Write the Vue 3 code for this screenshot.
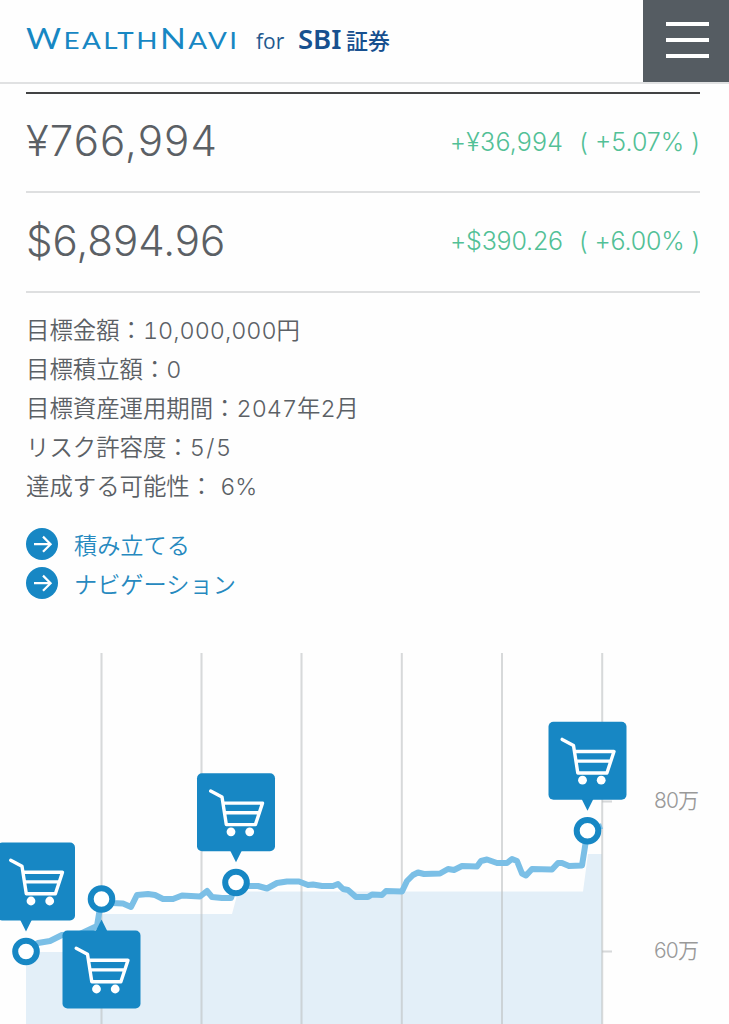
<template>
  <div class="page">

    <!-- HEADER -->
    <header class="header">
      <div class="brand">
        <span class="logo"><span class="cap">W</span>EALTH<span class="cap">N</span>AVI</span>
        <span class="for">for</span>
        <span class="sbi">SBI</span>
        <span class="sbi-jp">証券</span>
      </div>
      <button class="menu" type="button" aria-label="メニュー">
        <span></span><span></span><span></span>
      </button>
    </header>

    <!-- ASSETS -->
    <section class="assets">
      <div v-for="a in assets" :key="a.amount" class="asset-row" :class="a.cls">
        <div class="amount">{{ a.amount }}</div>
        <div class="change">
          <span class="diff">{{ a.diff }}</span>
          <span class="rate"><span>(</span><span>{{ a.rate }}</span><span>)</span></span>
        </div>
      </div>
    </section>

    <!-- GOAL -->
    <section class="goal">
      <div v-for="g in goals" :key="g.label" class="goal-row">
        <span>{{ g.label }}：</span><span class="num" :class="g.cls">{{ g.value }}</span><template v-if="g.unit"><span>{{ g.unit }}</span></template><template v-if="g.month"><span class="num">{{ g.month }}</span><span>月</span></template>
      </div>
    </section>

    <nav class="links">
      <a v-for="l in links" :key="l" class="link">
        <svg class="link-icon" viewBox="0 0 32 32">
          <circle cx="16" cy="16" r="16" />
          <path d="M8 16.2H24.5M17 8.6L24.6 16.2L17 23.8" />
        </svg>
        <span>{{ l }}</span>
      </a>
    </nav>

    <!-- CHART -->
    <svg class="chart" viewBox="0 640 729 384" width="729" height="384">
      <defs>
        <g id="cart">
          <path class="cart-line" d="M13.7 17.7L25 23.7L29.3 51.3H58.4L65.5 29.8H26.2M27.7 39.4H62.3" />
          <circle class="cart-wheel" cx="34" cy="58.5" r="4.4" />
          <circle class="cart-wheel" cx="52.7" cy="58.5" r="4.4" />
        </g>
      </defs>
      <path class="area" d="M26 1024V952H96L101 914H232L238 891.5H583L588 854H602V1024Z" />
      <path v-for="x in gridX" :key="x" class="grid" :d="`M${x} 653V1024`" />
      <path class="grid" d="M602 801.5H612M602 951.5H612" />
      <polyline class="line" :points="line" />
      <g v-for="p in pins" :key="p.x">
        <circle class="dot" :cx="p.x" :cy="p.y" r="10.8" />
        <path class="pin" :d="p.up ? `M${p.x - 6} ${p.top + 1}l6 -12l6 12z` : `M${p.x - 6} ${p.top + 77}l6 12l6 -12z`" />
        <rect class="pin" :x="p.left" :y="p.top" width="78" height="78" rx="5" />
        <use href="#cart" :x="p.left" :y="p.top" />
      </g>
      <text class="axis" x="654" y="808" textLength="45">80万</text>
      <text class="axis" x="654" y="958" textLength="45">60万</text>
    </svg>
  </div>
</template>

<script setup>
const assets = [
  { amount: '¥766,994', diff: '+¥36,994', rate: '+5.07%', cls: 'yen' },
  { amount: '$6,894.96', diff: '+$390.26', rate: '+6.00%', cls: 'dollar' },
]

const goals = [
  { label: '目標金額', value: '10,000,000', unit: '円' },
  { label: '目標積立額', value: '0' },
  { label: '目標資産運用期間', value: '2047', unit: '年', month: '2' },
  { label: 'リスク許容度', value: '5/5', cls: 'wide' },
  { label: '達成する可能性', value: '6%', cls: 'spaced' },
]

const links = ['積み立てる', 'ナビゲーション']

const gridX = [101.5, 201.5, 301.5, 401.8, 502, 602.2]

const line = [
  '26,951 38,943 50,941 62,935 80,934 97,926 101.5,899 112,903 123,903.5 131,907 137,895 148,894 155,895',
  '163,899 173,899 182,895.5 200,896.5 207,891 212,897 222,898 231,898 236,883 248,886 258,886 267,888.5',
  '277,883 287,881.5 299,881.5 308,885 313,884.5 322,886 333,886 338,884 343,889 348,890 356,897 368,897',
  '372,894.5 382,895 386,891 402,891.5 407,881 413,875 418,872.5 424,874 440,873.5 448,869 454,870 462,866',
  '477,866.5 481,861 487,859.5 497,863 507,863 512,859 517,861 522,873.5 526,875.5 532,869 552,869.5',
  '558,863 562,863 569,866 582,865.5 587.5,831 602,826',
].join(' ')

// the first pin is pushed right so that its cart stays on screen
const pins = [
  { x: 26, y: 951.5, left: -3, top: 842.5 },
  { x: 101.5, y: 899, left: 62.5, top: 930.5, up: true },
  { x: 236, y: 882.5, left: 197, top: 773.3 },
  { x: 587.5, y: 830.7, left: 548.5, top: 721.7 },
]
</script>

<style>
body { background: #fefefe; }
</style>

<style scoped>
.page {
  width: 729px;
  height: 1024px;
  overflow: hidden;
  display: flex;
  flex-direction: column;
  color: #5b6065;
  font-family: Inter, 'Noto Sans CJK JP', sans-serif;
  font-weight: 350;
}

/* HEADER */
.header {
  flex: none;
  height: 82px;
  display: flex;
  justify-content: space-between;
  border-bottom: 2px solid #e0e1e2;
}
.brand {
  display: flex;
  align-items: baseline;
  padding: 21px 0 0 26px;
  line-height: 34px;
  white-space: nowrap;
}
.logo {
  width: 230px;
  font-family: Lato, sans-serif;
  font-weight: 400;
  font-size: 23px;
  letter-spacing: 2px;
  color: #1787c3;
  transform: scaleX(1.21);
  transform-origin: left;
}
.cap { font-size: 28px; }
.for {
  width: 42px;
  font-family: 'Open Sans', sans-serif;
  font-weight: 400;
  font-size: 21px;
  color: #23598f;
}
.sbi {
  width: 48px;
  font-family: 'Noto Sans', sans-serif;
  font-weight: 600;
  font-size: 27.5px;
  color: #17508f;
}
.sbi-jp {
  font-family: 'Noto Sans CJK JP', sans-serif;
  font-weight: 500;
  font-size: 22px;
  color: #17508f;
}

.menu {
  width: 86px;
  height: 82px;
  padding: 0 0 2px 2px;
  border: 0;
  background: #555c62;
  display: flex;
  flex-direction: column;
  align-items: center;
  justify-content: center;
  gap: 12px;
}
.menu span { width: 43px; height: 4px; background: #fff; }

/* ASSETS */
.assets {
  flex: none;
  margin: 8px 29px 0 26px;
  border-top: 2px solid #424344;
}
.asset-row {
  box-sizing: border-box;
  height: 100px;
  display: flex;
  align-items: center;
  justify-content: space-between;
  padding-bottom: 2px;
  border-bottom: 2px solid #dedfe0;
  white-space: nowrap;
}
.asset-row:first-child { height: 99px; }
.amount { font-size: 42px; line-height: 50px; padding-bottom: 1px; }
.yen .amount { letter-spacing: 1.1px; }
.change {
  display: flex;
  gap: 16px;
  font-size: 25px;
  font-weight: 300;
  color: #52c096;
}
.yen .diff { letter-spacing: .2px; }
.dollar .change { letter-spacing: -.2px; }
.rate { display: flex; gap: 7px; }

/* GOAL */
.goal {
  flex: none;
  padding: 18px 0 0 26px;
  font-size: 23.4px;
}
.goal-row {
  display: flex;
  height: 39px;
  line-height: 39px;
  white-space: nowrap;
}
.num { font-variant-numeric: tabular-nums; }
.wide { letter-spacing: 1.5px; }
.spaced { margin-left: 7px; }

/* LINKS */
.links {
  flex: none;
  display: flex;
  flex-direction: column;
  padding: 18px 0 0 26px;
}
.link {
  display: flex;
  align-items: center;
  gap: 16px;
  height: 39px;
  font-size: 23.2px;
  color: #2689bf;
}
.link-icon { width: 32px; height: 32px; }
.link-icon circle { fill: #1787c4; }
.link-icon path { fill: none; stroke: #fff; stroke-width: 2.2; }

/* CHART */
.chart { flex: none; display: block; margin-top: auto; }
.area { fill: #e3eff8; }
.grid { fill: none; stroke: #bcbfc2; stroke-opacity: .6; stroke-width: 2; }
.line {
  fill: none;
  stroke: #7bbfe6;
  stroke-width: 6;
  stroke-linejoin: round;
}
.dot { fill: #fff; stroke: #1787c4; stroke-width: 6; }
.pin { fill: #1787c4; }
.cart-line {
  fill: none;
  stroke: #fff;
  stroke-width: 3.4;
  stroke-linecap: round;
  stroke-linejoin: round;
}
.cart-wheel { fill: #fff; }
.axis { font-size: 21px; fill: #999; }
</style>
